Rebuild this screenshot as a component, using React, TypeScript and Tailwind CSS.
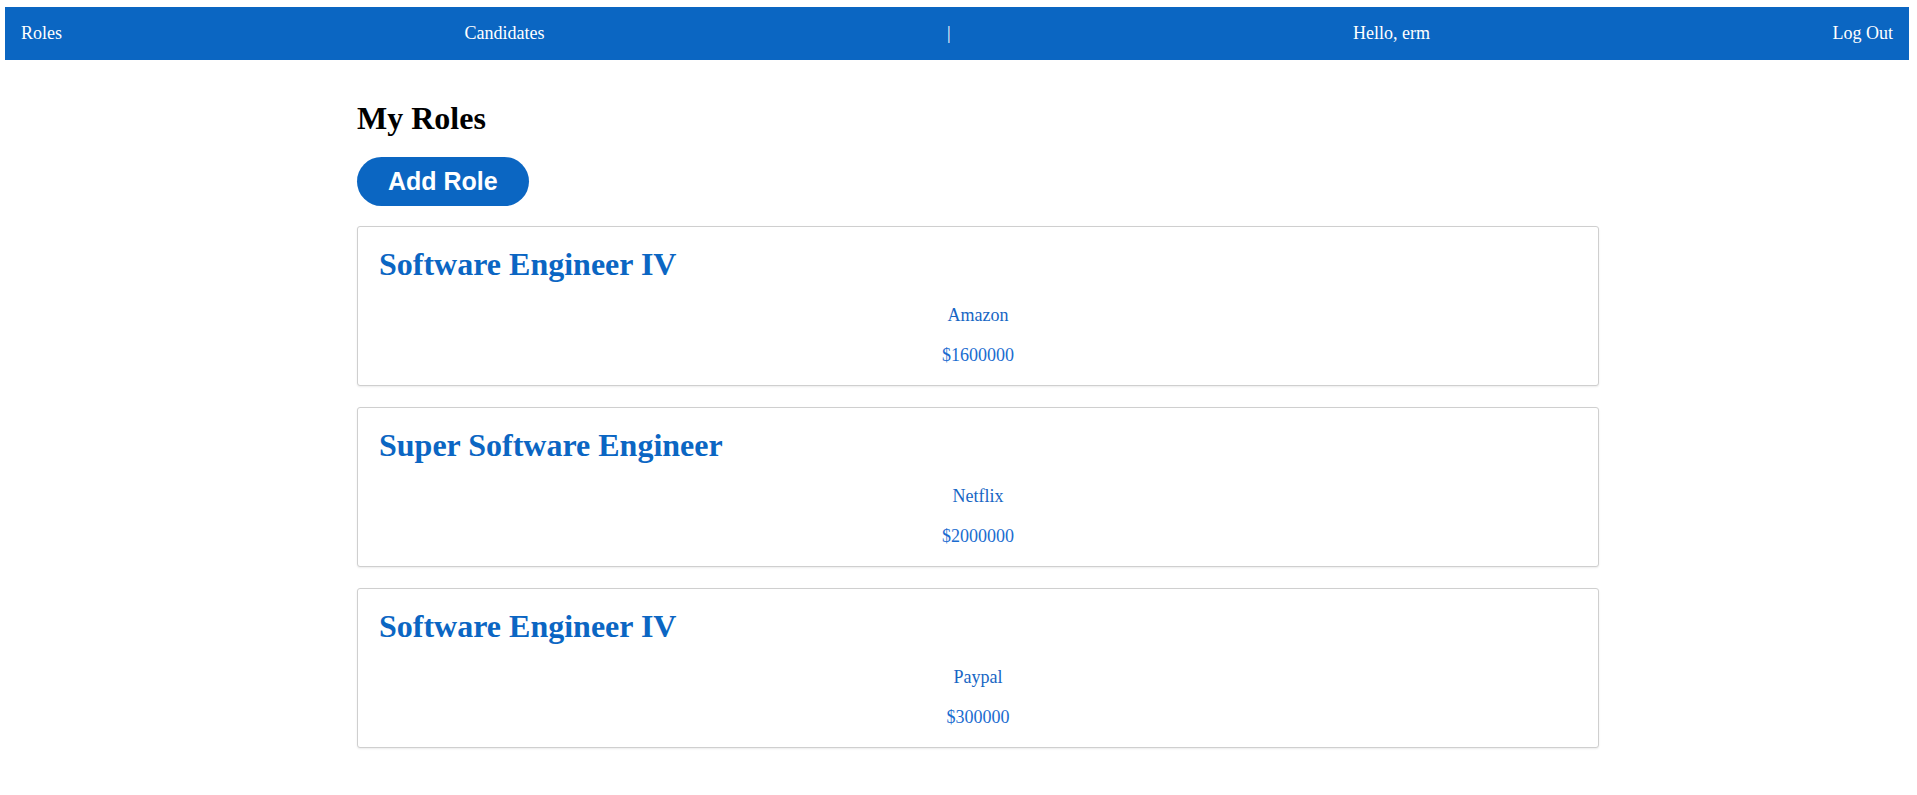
const NAV = ["Roles", "Candidates", "|", "Hello, erm", "Log Out"]

interface Role { title: string; company: string; salary: string }

const ROLES: Role[] = [
  { title: "Software Engineer IV", company: "Amazon", salary: "$1600000" },
  { title: "Super Software Engineer", company: "Netflix", salary: "$2000000" },
  { title: "Software Engineer IV", company: "Paypal", salary: "$300000" },
]

function RoleCard({ role }: { role: Role }) {
  return (
    <div className="h-[160px] border border-[#cfcfcf] rounded-[3px] bg-white shadow-[0_1px_2px_rgba(0,0,0,0.08)] pt-[19px] px-[21px] text-[#0b66c3]">
      <h2 className="text-[32px] leading-[37px] font-bold">{role.title}</h2>
      <p className="mt-[20px] text-[18px] leading-[24px] text-center text-[#1766c4]">{role.company}</p>
      <p className="mt-[16px] text-[18px] leading-[24px] text-center text-[#1a6cd0]">{role.salary}</p>
    </div>
  )
}

export default function App() {
  return (
    <div className="min-h-screen bg-white font-['Liberation_Serif',serif] pt-[7px] pb-10">
      <nav className="ml-[5px] w-[1904px] h-[53px] bg-[#0b66c2] px-4 flex items-center justify-between text-white text-[18px]">
        {NAV.map((item, i) => (
          <span key={i}>{item}</span>
        ))}
      </nav>

      <main className="ml-[357px] w-[1242px] pt-[40px]">
        <h1 className="text-[32px] leading-[37px] font-bold text-black">My Roles</h1>
        <button className="mt-[20px] h-[49px] px-[31px] rounded-full bg-[#0b66c2] text-white font-['Liberation_Sans',sans-serif] font-bold text-[25px] flex items-center">
          Add Role
        </button>
        <div className="mt-[20px] flex flex-col gap-[21px]">
          {ROLES.map((r, i) => (
            <RoleCard key={i} role={r} />
          ))}
        </div>
      </main>
    </div>
  )
}
